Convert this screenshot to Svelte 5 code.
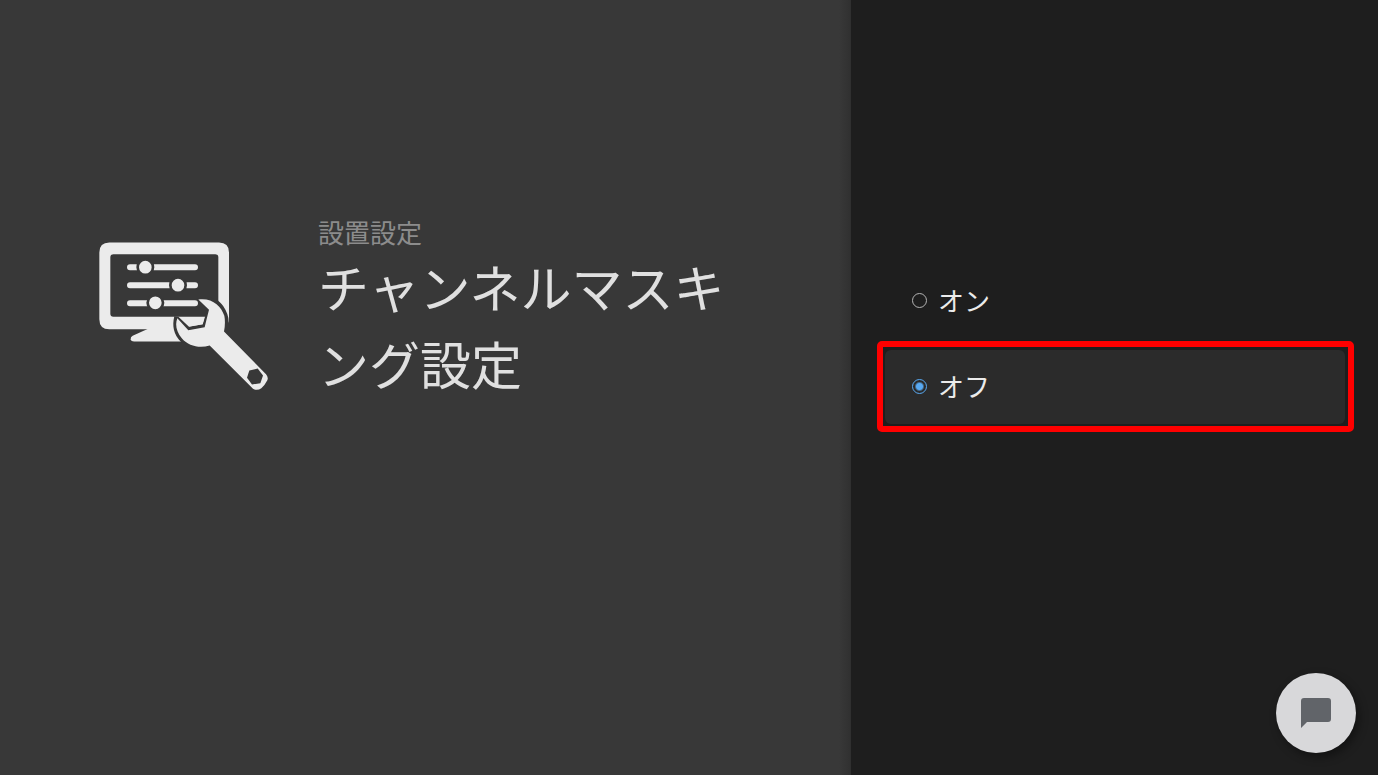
<script lang="ts">
  const options = [
    { value: 'on', label: 'オン' },
    { value: 'off', label: 'オフ' },
  ];

  let selected = $state('off');
</script>

<div class="screen">
  <main class="info">
    <svg class="icon" viewBox="27 36 510 446" aria-hidden="true">
      <!-- Monitor -->
      <path
        fill="#ebebeb"
        fill-rule="evenodd"
        d="M58 37H387Q417 37 417 67V274Q411 297 387 297H58Q28 297 28 267V67Q28 37 58 37ZM70 72Q61 72 61 81V251Q61 260 70 260H376Q385 260 385 251V81Q385 72 376 72Z"
      />
      <path fill="#ebebeb" d="M176 295L128 317Q121 321 122 328Q123 334 132 334H300V295Z" />
      <!-- Sliders -->
      <g stroke="#ebebeb" stroke-width="18" stroke-linecap="round">
        <path d="M120 111H315M120 165H315M120 219H315" />
      </g>
      <g fill="#ebebeb" stroke="#383838" stroke-width="8">
        <circle cx="166" cy="111" r="23" />
        <circle cx="264" cy="165" r="23" />
        <circle cx="196" cy="218" r="23" />
      </g>
      <!-- Wrench -->
      <path
        fill="#383838"
        d="M322 206L330 202C365 198 387 208 400 228Q416 252 416 274L420 300L360 350L274 336C250 312 246 286 253 258L265 260L297 290L338 282L345 260L353 240Z"
      />
      <path fill="#ebebeb" d="M275 261H343L338 282L298 289Z" />
      <path
        fill="#ebebeb"
        d="M325 208C366 202 394 228 403 257Q407 278 402 304L528 432Q536 441 532 450Q525 464 514 474Q502 483 489 476L359 346C328 356 295 347 276 325C258 303 255 281 262 264L295 300L344 291L349 270L357 239Z"
      />
      <path fill="#383838" d="M478 421L503 415L519 436L511 459L486 463L471 443Z" />
    </svg>
    <div class="heading">
      <p class="breadcrumb">設置設定</p>
      <h1>チャンネルマスキング設定</h1>
    </div>
  </main>

  <aside class="panel">
    <div class="options" role="radiogroup" aria-label="チャンネルマスキング設定">
      {#each options as option}
        <label class="option" class:active={selected === option.value}>
          <input type="radio" name="masking" value={option.value} bind:group={selected} />
          <span>{option.label}</span>
        </label>
      {/each}
    </div>
    <button class="chat" type="button" aria-label="チャット">
      <svg viewBox="0 0 30 30" aria-hidden="true">
        <path fill="#616469" d="M3 0H27Q30 0 30 3V21Q30 24 27 24H6L0 30V3Q0 0 3 0Z" />
      </svg>
    </button>
  </aside>
</div>

<style>
  :global(body) { background: #1e1e1e; }

  .screen {
    display: flex;
    min-height: 100vh;
    font-family: "Noto Sans CJK JP", sans-serif;
    background: #1e1e1e;
  }

  .info {
    flex: 1;
    box-sizing: border-box;
    display: flex;
    align-items: flex-start;
    gap: 49px;
    padding: 216px 98px 0 99px;
    background: linear-gradient(to left, #303030, #383838 12px);
  }

  .icon {
    width: 170px;
    height: 149px;
    margin-top: 26px;
    flex-shrink: 0;
  }

  .heading { flex: 1; }

  .breadcrumb {
    margin: 0;
    font-size: 26px;
    line-height: 32px;
    color: #8c8c8c;
  }

  h1 {
    margin: 0;
    font-size: 51px;
    font-weight: 400;
    line-height: 77px;
    color: #e0e0e0;
    word-break: break-all;
  }

  .panel {
    width: 38.25%;
    box-sizing: border-box;
    padding: 264px 33px 0 34px;
    background: #1e1e1e;
  }

  .options {
    display: flex;
    flex-direction: column;
    gap: 12px;
  }

  .option {
    position: relative;
    box-sizing: border-box;
    display: flex;
    align-items: center;
    gap: 11px;
    height: 74px;
    padding: 0 0 2px 27px;
    border-radius: 6px;
    font-size: 26px;
    color: #ebebeb;
  }

  .option span { padding-bottom: 2px; }

  .active { background: #2b2b2b; }

  /* Highlight frame round the chosen row */
  .active::after {
    content: "";
    position: absolute;
    inset: -9px -9px -8px -8px;
    border: 6px solid #ff0000;
    border-radius: 5px;
    pointer-events: none;
  }

  input {
    appearance: none;
    box-sizing: border-box;
    width: 15px;
    height: 15px;
    margin: 0;
    border: 1px solid #b4b4b4;
    border-radius: 50%;
  }

  input:checked {
    border-color: #58a9f2;
    background: radial-gradient(circle, #58a9f2 3px, transparent 5px);
  }

  .chat {
    position: fixed;
    right: 22px;
    bottom: 22px;
    display: flex;
    align-items: center;
    justify-content: center;
    width: 80px;
    height: 80px;
    padding: 0;
    border: 0;
    border-radius: 50%;
    background: #d8d8da;
    box-shadow: 3px 4px 10px rgba(0, 0, 0, 0.4);
  }

  .chat svg { width: 30px; height: 30px; }
</style>
